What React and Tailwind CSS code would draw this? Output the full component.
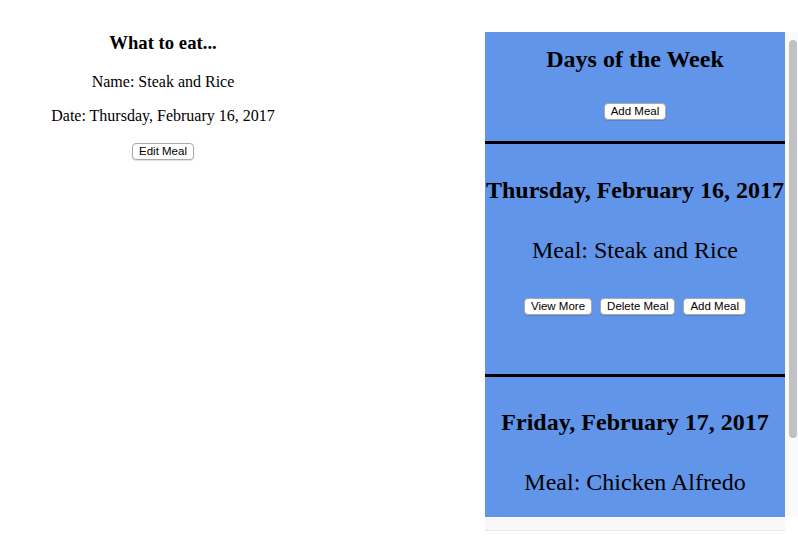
import React from "react";

const Btn = ({ children }) => (
  <button className="h-[17px] px-[6px] bg-white border border-[#a9a9a9] rounded-[4px] text-[11.5px] leading-[15px] text-black font-['Liberation_Sans',Arial,sans-serif] shadow-[0_1px_1px_rgba(0,0,0,0.12)]">
    {children}
  </button>
);

const DayCard = ({ date, meal, buttons, height, pad }) => (
  <div className={`flex flex-col items-center border-b-[3px] border-black ${height} ${pad}`}>
    <h1 className="text-[24px] font-bold whitespace-nowrap">{date}</h1>
    <p className="mt-[33px] text-[24px] whitespace-nowrap">Meal: {meal}</p>
    {buttons && (
      <div className="mt-[34px] flex gap-[8px]">
        <Btn>View More</Btn>
        <Btn>Delete Meal</Btn>
        <Btn>Add Meal</Btn>
      </div>
    )}
  </div>
);

export default function App() {
  return (
    <div className="w-[798px] h-[552px] bg-white flex justify-between font-['Liberation_Serif','Times_New_Roman',serif] leading-[normal] text-black overflow-hidden">
      {/* meal details */}
      <div className="w-[326px] pt-[32px] flex flex-col items-center text-center">
        <h3 className="text-[18.72px] font-bold">What to eat...</h3>
        <p className="mt-[19px] text-[16px]">Name: Steak and Rice</p>
        <p className="mt-[16px] text-[16px]">Date: Thursday, February 16, 2017</p>
        <div className="mt-[16px]">
          <Btn>Edit Meal</Btn>
        </div>
      </div>

      {/* week list */}
      <div className="w-[313px] mt-[32px] flex h-[499px]">
        <div className="w-[300px] flex flex-col">
          <div className="h-[485px] overflow-hidden bg-[#6195e9]">
            <div className="h-[112px] pt-[14px] flex flex-col items-center border-b-[3px] border-black">
              <h2 className="text-[24px] font-bold">Days of the Week</h2>
              <div className="mt-[28px]">
                <Btn>Add Meal</Btn>
              </div>
            </div>
            <DayCard
              date="Thursday, February 16, 2017"
              meal="Steak and Rice"
              buttons
              height="h-[233px]"
              pad="pt-[33px]"
            />
            <DayCard
              date="Friday, February 17, 2017"
              meal="Chicken Alfredo"
              height="h-[233px]"
              pad="pt-[32px]"
            />
          </div>
          <div className="h-[14px] bg-[#f8f8f8] border-b border-[#e8e8e8]" />
        </div>
        <div className="w-[13px] h-[485px] bg-[#fafafa] pt-[8px] pl-[4px]">
          <div className="w-[8px] h-[398px] rounded-full bg-[#c1c1c1]" />
        </div>
      </div>
    </div>
  );
}
